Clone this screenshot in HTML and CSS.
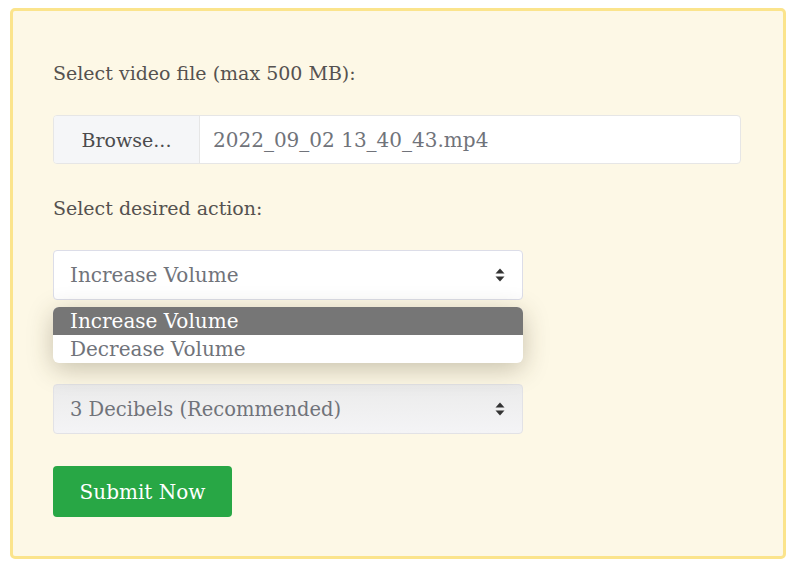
FILE: index.html
```html
<!DOCTYPE html>
<html lang="en">
<head>
    <meta charset="UTF-8">
    <meta name="viewport" content="width=device-width, initial-scale=1.0">
    <title>Video Volume Tool</title>
    <link rel="stylesheet" href="styles.css">
</head>
<body>
    <div class="panel">
        <form id="volume-form">
            <div class="form-group">
                <label class="field-label">Select video file (max 500 MB):</label>
                <div class="file-group">
                    <span class="file-btn">Browse...</span>
                    <span class="file-name">2022_09_02 13_40_43.mp4</span>
                </div>
            </div>

            <div class="form-group">
                <label class="field-label">Select desired action:</label>
                <div class="select-wrap">
                    <div class="fake-select">
                        <span>Increase Volume</span>
                        <svg class="sort-icon" width="10" height="14" viewBox="0 0 10 14">
                            <path d="M5 0.5 L9.5 5.5 H0.5 Z" fill="#333"/>
                            <path d="M5 13.5 L9.5 8.5 H0.5 Z" fill="#333"/>
                        </svg>
                    </div>
                    <ul class="dropdown">
                        <li class="selected">Increase Volume</li>
                        <li>Decrease Volume</li>
                    </ul>
                </div>
            </div>

            <div class="form-group amount-group">
                <div class="fake-select muted">
                    <span>3 Decibels (Recommended)</span>
                    <svg class="sort-icon" width="10" height="14" viewBox="0 0 10 14">
                        <path d="M5 0.5 L9.5 5.5 H0.5 Z" fill="#333"/>
                        <path d="M5 13.5 L9.5 8.5 H0.5 Z" fill="#333"/>
                    </svg>
                </div>
            </div>

            <button type="button" class="btn btn-success">Submit Now</button>
        </form>
    </div>
</body>
</html>
```

FILE: styles.css
```css
:root {
    --panel-bg: #fdf8e6;
    --panel-border: #fbe48c;
    --text-color: #555250;
    --muted-text: #70737a;
    --border-color: #dcdde8;
    --success-color: #28a745;
}

body {
    margin: 0;
    background-color: white;
    font-family: "DejaVu Serif", "Liberation Serif", serif;
    color: var(--text-color);
}

.panel {
    margin: 8px 14px 10px 10px;
    padding: 49px 42px 39px 40px;
    background-color: var(--panel-bg);
    border: 3px solid var(--panel-border);
    border-radius: 5px;
}

.form-group {
    margin-bottom: 31px;
}

.field-label {
    display: block;
    font-size: 19px;
    line-height: 27px;
    margin-bottom: 28px;
}

.file-group {
    display: flex;
    height: 49px;
    box-sizing: border-box;
    border: 1px solid #e6e6e6;
    border-radius: 4px;
    background-color: white;
    font-size: 20px;
    overflow: hidden;
}

.file-btn {
    display: flex;
    align-items: center;
    justify-content: center;
    width: 145px;
    background-color: #f5f6f8;
    border-right: 1px solid #e6e6e6;
    color: #4b4b4d;
    font-size: 19px;
}

.file-name {
    display: flex;
    align-items: center;
    padding-left: 13px;
    color: var(--muted-text);
}

.select-wrap {
    position: relative;
    width: 470px;
}

.fake-select {
    display: flex;
    align-items: center;
    justify-content: space-between;
    width: 470px;
    height: 50px;
    box-sizing: border-box;
    padding: 0 16px 0 16px;
    background-color: white;
    border: 1px solid var(--border-color);
    border-radius: 4px;
    font-size: 20px;
    color: var(--muted-text);
}

.fake-select.muted {
    background: linear-gradient(to bottom, #ebebeb, #f4f4f6);
    border-color: #e2e2e6;
    font-size: 19.5px;
}

.sort-icon {
    margin-right: 1px;
}

.dropdown {
    position: absolute;
    top: 57px;
    left: 0;
    right: 0;
    margin: 0;
    padding: 0;
    list-style: none;
    background-color: white;
    border-radius: 6px;
    overflow: hidden;
    box-shadow: 0 6px 26px rgba(60, 50, 20, 0.28);
    font-size: 20px;
    z-index: 2;
}

.dropdown li {
    height: 28px;
    line-height: 28px;
    padding-left: 17px;
    color: var(--muted-text);
}

.dropdown li.selected {
    background-color: #767676;
    color: white;
}

.amount-group {
    margin-top: 84px;
    margin-bottom: 32px;
}

.btn {
    display: block;
    width: 179px;
    height: 51px;
    border: none;
    border-radius: 4px;
    font-family: inherit;
    font-size: 20px;
    color: white;
    cursor: pointer;
}

.btn-success {
    background-color: var(--success-color);
}
```
